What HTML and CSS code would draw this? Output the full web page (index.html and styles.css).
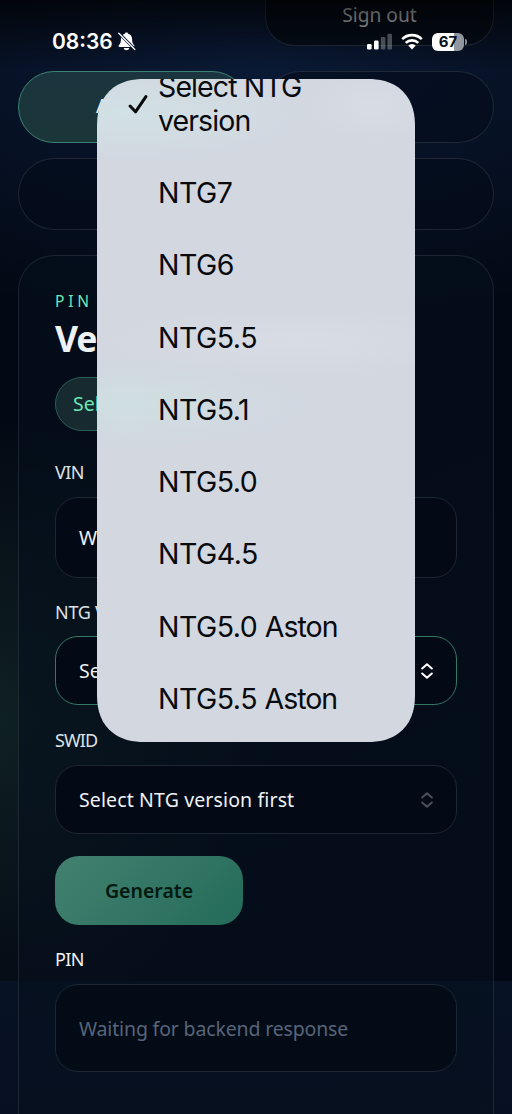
FILE: index.html
```html
<!DOCTYPE html>
<html lang="en">
<head>
<meta charset="utf-8">
<title>PIN</title>
<link rel="stylesheet" href="styles.css">
</head>
<body>
<div class="screen">
  <main class="page">
    <div class="account"><button class="signout">Sign out</button></div>
    <nav class="tabs">
      <div class="tab tab-active">A</div>
      <div class="tab"></div>
      <div class="tab tab-wide"></div>
    </nav>
    <section class="panel">
      <p class="eyebrow">PIN G</p>
      <h1 class="title">Ve</h1>
      <div class="pill">Sel</div>
      <div class="label label-vin">VIN</div>
      <div class="field field-vin">W</div>
      <div class="label label-ntg">NTG V</div>
      <div class="field select focused"><span>Sel</span>
        <svg class="chevrons" viewBox="0 0 12 16"><path d="M1.2 5.5 6 1.2l4.800 4.300M1.200 10.500 6 14.800l4.800-4.300"/></svg>
      </div>
      <div class="label label-swid">SWID</div>
      <div class="field select disabled"><span class="select-text">Select NTG version first</span>
        <svg class="chevrons" viewBox="0 0 12 16"><path d="M1.2 5.5 6 1.2l4.800 4.300M1.200 10.500 6 14.800l4.800-4.300"/></svg>
      </div>
      <button class="generate">Generate</button>
      <div class="label label-pin">PIN</div>
      <div class="field output"><span>Waiting for backend response</span></div>
    </section>
  </main>

  <div class="shade"></div>
  <header class="status">
    <div class="clock">08:36</div>
    <svg class="bell" viewBox="0 0 18 19"><path fill="#fff" d="M8.500.5c-.9 0-1.500.5-1.700 1.300C4.300 2.600 2.900 4.700 2.900 7c0 3.300-.6 4.800-1.900 6-.9.900-.5 2 .7 2h13.600c1.200 0 1.600-1.100.7-2-1.300-1.200-1.900-2.700-1.900-6 0-2.300-1.400-4.400-3.900-5.200C10 1 9.400.5 8.500.5zM5.700 16.100h5.600c-.3 1.400-1.400 2.200-2.800 2.200s-2.500-.8-2.800-2.200z"/><path stroke="#07142b" stroke-width="3" d="M1 1.200 17 17.500"/><path stroke="#fff" stroke-width="1.300" stroke-linecap="round" d="M.8 1.200 16.800 17.500"/></svg>
    <div class="status-right">
      <svg class="signal" viewBox="0 0 25 17"><g fill="#fff"><rect y="11" width="4.600" height="5.500" rx="1.300"/><rect x="7" y="7.500" width="4.600" height="9" rx="1.300"/><g opacity=".27"><rect x="13.800" y="4" width="4.600" height="12.500" rx="1.300"/><rect x="20.400" y=".7" width="4.600" height="15.800" rx="1.300"/></g></g></svg>
      <svg class="wifi" viewBox="0 0 22 17"><g fill="none" stroke="#fff" stroke-width="2.600"><path d="M1.200 6.100a14 14 0 0 1 19.600 0"/><path d="M4.700 9.900a9 9 0 0 1 12.600 0"/></g><path fill="#fff" d="M7.200 12.400a5.500 5.500 0 0 1 7.600 0L11 16.500z"/></svg>
      <div class="battery"><span>67</span></div>
      <i class="battery-cap"></i>
    </div>
  </header>

  <div class="menu">
    <ul class="options">
      <li class="option option-first"><svg class="check" viewBox="0 0 19 19"><path d="M1.600 11 7 16.800 17.400 1.600"/></svg>Select NTG<br>version</li>
      <li class="option">NTG7</li>
      <li class="option">NTG6</li>
      <li class="option">NTG5.5</li>
      <li class="option">NTG5.1</li>
      <li class="option">NTG5.0</li>
      <li class="option">NTG4.5</li>
      <li class="option">NTG5.0 <span class="tight">Aston</span></li>
      <li class="option">NTG5.5 <span class="tight">Aston</span></li>
    </ul>
  </div>
</div>
</body>
</html>
```

FILE: styles.css
```css
* { box-sizing: border-box; }
body { margin: 0; background: #030914; }

.screen {
  position: relative;
  width: 512px;
  height: 1114px;
  overflow: hidden;
  color: #eef2f5;
  font: 19.5px/24px "Trebuchet MS", "Noto Sans", sans-serif;
  background:
    linear-gradient(#07122600 981px, #071224 981px, #061022 1114px),
    radial-gradient(ellipse 280px 300px at 0 720px, #0f2022 0%, #0f202200 100%),
    radial-gradient(ellipse 560px 270px at 256px 55px, #0a1a36 0%, #0a1a3600 100%),
    #030914;
}

.page { display: flex; flex-direction: column; padding: 0 18px; height: 1114px; }
.account { display: flex; justify-content: flex-end; height: 46px; }
.signout {
  width: 229px; height: 46px; padding: 0 0 15px;
  border: 1px solid #26313e; border-top: 0; border-radius: 0 0 29px 29px;
  background: #050d1a; color: #d4d7dc;
  font: 19.2px/28px "Trebuchet MS", "Noto Sans", sans-serif;
}

.tabs { display: grid; grid-template-columns: 1fr 1fr; gap: 15px 16px; margin-top: 25px; }
.tab {
  height: 72px; padding: 22px 0 0 77px;
  border: 1px solid #ffffff1b; border-radius: 36px;
  background: #040b1890;
}
.tab-active { border-color: #3c8372; background: linear-gradient(#1b343f, #1a3638); }
.tab-wide { grid-column: 1 / 3; }

.panel {
  display: flex; flex-direction: column; align-items: stretch;
  flex: 1; margin-top: 25px; padding: 34px 36px 0;
  border: 1px solid #ffffff17; border-bottom: 0; border-radius: 36px 36px 0 0;
  background: linear-gradient(160deg, #040f1b99, #07111f99);
}
.eyebrow { margin: 0; color: #6ee7b7; font-size: 15.500px; line-height: 22px; letter-spacing: 3.800px; word-spacing: -3px; white-space: nowrap; }
.title { margin: 3px 0 0; height: 48px; font-size: 35.500px; line-height: 46px; font-weight: 700; letter-spacing: -1px; }
.pill {
  width: 180px; height: 54px; margin-top: 14px; padding: 14px 17px;
  border: 1px solid #285f54; border-radius: 27px;
  background: #162a30; color: #6ee7b7;
}
.label { height: 24px; font-size: 18px; line-height: 24px; letter-spacing: -.6px; color: #dde2e7; white-space: nowrap; }
.label-vin { margin-top: 29px; }
.label-ntg { margin-top: 22px; letter-spacing: -.3px; }
.label-swid { margin-top: 23px; letter-spacing: -.9px; }
.label-pin { margin-top: 22px; color: #f1f4f6; }
.field {
  display: flex; align-items: center; justify-content: space-between;
  height: 68px; padding: 0 23px 0 23px;
  border: 1px solid #1c2733; border-radius: 23px;
  background: #030915;
}
.field-vin { height: 81px; margin-top: 13px; }
.focused { height: 69px; margin-top: 12px; border-color: #327963; }
.disabled { height: 69px; margin-top: 13px; padding-top: 1px; }
.select-text { letter-spacing: .13px; }
.chevrons { width: 12px; height: 16px; fill: none; stroke: #fff; stroke-width: 2; stroke-linecap: round; stroke-linejoin: round; }
.disabled .chevrons { stroke: #4a5059; }
.generate {
  width: 188px; height: 69px; margin-top: 22px; padding: 1px 0 0;
  border: 0; border-radius: 24px;
  background: linear-gradient(135deg, #438170, #246b5a);
  color: #03190f;
  font: 600 19.5px/24px "Trebuchet MS", "Noto Sans", sans-serif;
}
.output { height: 88px; margin-top: 13px; padding-top: 1px; color: #58647a; background: #030b17; letter-spacing: -.16px; }

.shade { position: absolute; inset: 0 0 auto; height: 70px; background: linear-gradient(#000000b8, #00000070 25px, #00000000); }

.status { position: absolute; inset: 29px 0 auto; display: flex; align-items: center; height: 25px; padding: 0 45px 0 52px; font-family: Inter, sans-serif; }
.clock { width: 62px; font-size: 21px; line-height: 25px; font-weight: 600; letter-spacing: 0; color: #fff; }
.bell { width: 18px; height: 19px; margin-left: 4px; }
.status-right { display: flex; align-items: center; margin-left: auto; }
.signal { width: 25px; height: 17px; }
.wifi { width: 22px; height: 17px; margin-left: 9px; }
.battery {
  width: 32px; height: 18px; margin-left: 9px; border-radius: 6px;
  background: linear-gradient(90deg, #fff 22px, #92969e 22px);
  color: #081124; font-size: 15px; line-height: 18px; font-weight: 700; text-align: center;
}
.battery-cap { width: 2px; height: 6px; margin-left: 1px; border-radius: 0 2px 2px 0; background: #858b96; }

.menu {
  position: absolute; left: 97px; top: 79px; width: 318px; height: 663px;
  overflow: hidden; border-radius: 47px; corner-shape: superellipse(1.2);
  background:
    radial-gradient(ellipse 65px 35px at 277px 27px, #d8dce5, #d8dce500),
    radial-gradient(ellipse 180px 48px at 30px 35px, #d1e1e5, #d1e1e500),
    radial-gradient(ellipse 190px 34px at 200px 263px, #d8dce5, #d8dce500),
    radial-gradient(ellipse 180px 45px at 30px 325px, #cfdfe1, #cfdfe100),
    #d2d7e0;
}
.options { margin: -28px 0 0; padding: 0; list-style: none; }
.option {
  position: relative; height: 72.250px; padding: 19px 0 19px 61px;
  color: #080a0d; font: 28.500px/34.200px Inter, sans-serif; letter-spacing: -.5px; white-space: nowrap;
}
.option-first { height: 106px; letter-spacing: -.9px; }
.tight { letter-spacing: -1px; }
.check { position: absolute; left: 31px; top: 44px; width: 20px; height: 19px; fill: none; stroke: #080a0d; stroke-width: 3; stroke-linecap: round; stroke-linejoin: round; }
```
